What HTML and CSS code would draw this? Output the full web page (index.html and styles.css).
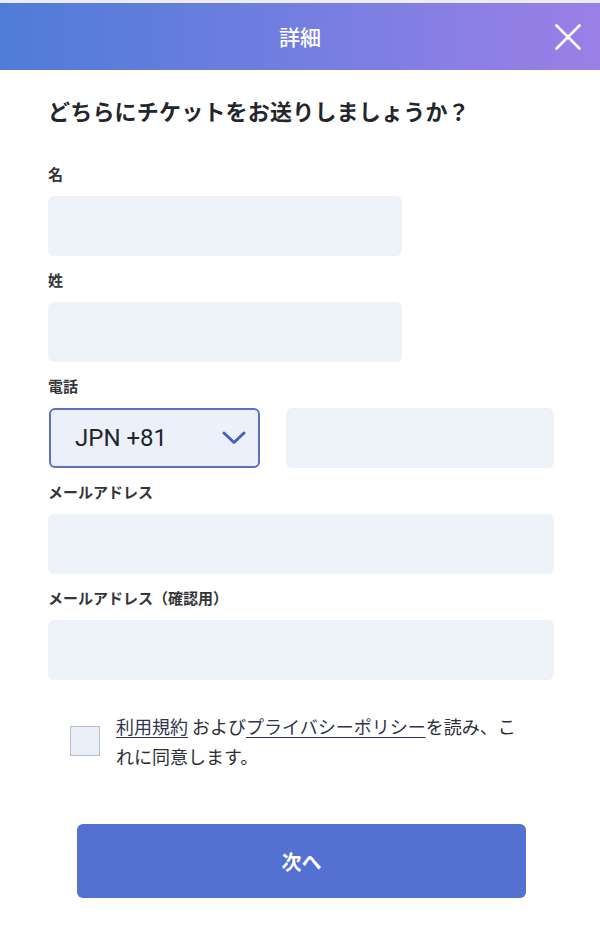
FILE: index.html
```html
<!DOCTYPE html>
<html lang="ja">
<head>
<meta charset="utf-8">
<title>詳細</title>
<link rel="stylesheet" href="styles.css">
</head>
<body>
<header class="topbar">
  <span class="topbar-spacer"></span>
  <h1 class="topbar-title">詳細</h1>
  <button class="close-btn" aria-label="閉じる">
    <svg width="26" height="26" viewBox="0 0 26 26"><path d="M1.5 1.5 L24.5 24.5 M24.5 1.5 L1.5 24.5" stroke="#fff" stroke-width="2.6" stroke-linecap="round" fill="none"/></svg>
  </button>
</header>
<main class="content">
  <h2 class="question">どちらにチケットをお送りしましょうか？</h2>
  <div class="field">
    <label class="label">名</label>
    <div class="input input-short"></div>
  </div>
  <div class="field">
    <label class="label">姓</label>
    <div class="input input-short"></div>
  </div>
  <div class="field">
    <label class="label">電話</label>
    <div class="phone-row">
      <div class="select">
        <span class="select-text">JPN +81</span>
        <svg class="chevron" width="24" height="14" viewBox="0 0 24 14"><path d="M2 2 L12 11.5 L22 2" stroke="#4d60b2" stroke-width="3" fill="none" stroke-linecap="round" stroke-linejoin="round"/></svg>
      </div>
      <div class="input phone-input"></div>
    </div>
  </div>
  <div class="field">
    <label class="label">メールアドレス</label>
    <div class="input"></div>
  </div>
  <div class="field">
    <label class="label">メールアドレス（確認用）</label>
    <div class="input"></div>
  </div>
  <div class="agree">
    <span class="checkbox"></span>
    <p class="agree-text"><a class="link">利用規約</a> および<a class="link">プライバシーポリシー</a>を読み、これに同意します。</p>
  </div>
  <button class="next-btn">次へ</button>
</main>
</body>
</html>
```
FILE: styles.css
```css
html, body {
  margin: 0;
  padding: 0;
  background: #fff;
}
body {
  border-top: 3px solid #ededf0;
  font-family: "Noto Sans CJK JP", "Noto Sans", sans-serif;
  color: #2b2d33;
}
.topbar {
  height: 67px;
  background: linear-gradient(90deg, #4f7cd7 0%, #6f7ee0 45%, #8d7fe6 80%, #9a7fe6 100%);
  display: grid;
  grid-template-columns: 1fr auto 1fr;
  align-items: center;
}
.topbar-title {
  margin: 0;
  font-size: 21px;
  font-weight: 500;
  color: #fff;
  line-height: 1;
}
.close-btn {
  justify-self: end;
  margin-right: 19px;
  width: 26px;
  height: 26px;
  padding: 0;
  border: 0;
  background: none;
  display: flex;
}
.content {
  padding: 25px 46px 40px 48px;
}
.question {
  margin: 0 0 39px;
  font-size: 22px;
  line-height: 30px;
  font-weight: 700;
  color: #24262b;
  letter-spacing: 0.2px;
}
.field {
  margin-bottom: 14px;
}
.label {
  display: block;
  font-size: 15px;
  line-height: 20px;
  font-weight: 700;
  color: #33353b;
  margin-bottom: 12px;
}
.input {
  height: 60px;
  background: #eef2f9;
  border-radius: 6px;
}
.input-short {
  width: 354px;
}
.phone-row {
  display: flex;
  gap: 26px;
}
.select {
  box-sizing: border-box;
  margin-left: 1px;
  width: 211px;
  height: 60px;
  border: 2px solid #5f70c2;
  border-radius: 6px;
  background: #ebf0fa;
  display: flex;
  align-items: center;
  justify-content: space-between;
  padding: 0 12px 0 24px;
}
.select-text {
  font-family: Roboto, "Liberation Sans", sans-serif;
  font-size: 24px;
  color: #23252a;
}
.chevron {
  display: block;
}
.phone-input {
  flex: 1;
}
.agree {
  display: flex;
  align-items: center;
  gap: 16px;
  margin-top: 31px;
  padding-left: 22px;
}
.checkbox {
  flex: none;
  box-sizing: border-box;
  width: 30px;
  height: 30px;
  border: 1.5px solid #b4bdcc;
  background: #e9eef9;
}
.agree-text {
  margin: 0;
  width: 414px;
  font-size: 18px;
  line-height: 30px;
  color: #2b2d33;
}
.link {
  text-decoration: underline;
  text-underline-offset: 3px;
  color: #2f3550;
}
.next-btn {
  display: block;
  margin: 53px 28px 0 29px;
  width: calc(100% - 57px);
  height: 74px;
  border: 0;
  border-radius: 6px;
  background: #5470d0;
  color: #fff;
  font-family: "Noto Sans CJK JP", "Noto Sans", sans-serif;
  font-size: 20px;
  font-weight: 700;
}
```
